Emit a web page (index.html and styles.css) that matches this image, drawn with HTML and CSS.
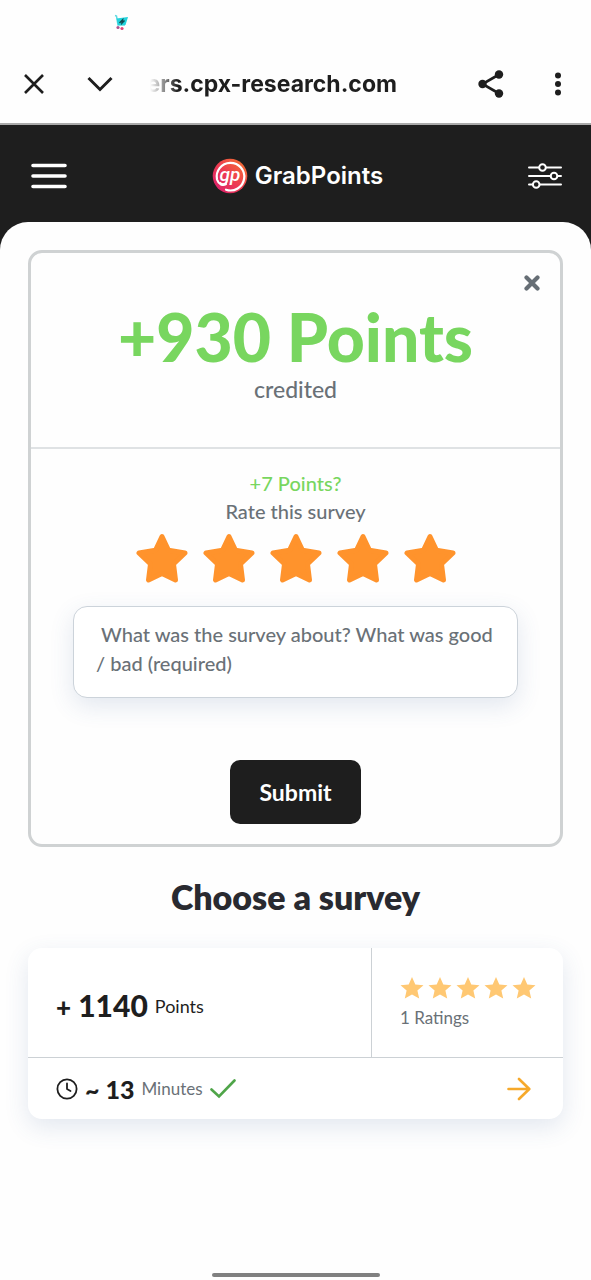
FILE: index.html
```html
<!DOCTYPE html>
<html lang="en">
<head>
<meta charset="utf-8">
<meta name="viewport" content="width=device-width, initial-scale=1">
<title>GrabPoints surveys</title>
<link rel="stylesheet" href="styles.css">
</head>
<body>
<svg class="defs" aria-hidden="true">
  <symbol id="star-round" viewBox="0 0 52 50"><path d="M26 3.500 32.500 17.300 49 20 37.500 31 39.500 47 26 40.500 12.500 47 14.500 31 3 20 19.500 17.300Z" fill="currentColor" stroke="currentColor" stroke-width="5" stroke-linejoin="round"/></symbol>
  <symbol id="star-small" viewBox="0 0 24 24"><path d="M12 1 15.300 8.400 23.500 9.300 17.400 14.600 19.200 22.500 12 18.400 4.800 22.500 6.600 14.600 .5 9.300 8.700 8.400Z" fill="currentColor"/></symbol>
</svg>

<div class="status-bar">
  <svg class="status-cart" viewBox="0 0 15 17" aria-hidden="true">
    <path d="M1 1.500 2.500 2 4 11H11" fill="none" stroke="#5fd9e0" stroke-width="1.500"/>
    <path d="M2.500 4.500 14 3 11.500 11H4Z" fill="#22d3dc"/>
    <path d="M5.500 9 8.500 6 8 9 10.500 6.500" fill="none" stroke="#124b52" stroke-width="1.500"/>
    <circle cx="4" cy="13.500" r="1.600" fill="#b0528f"/><circle cx="8" cy="14.500" r="1.600" fill="#e0457a"/>
  </svg>
</div>

<div class="browser-bar">
  <button class="icon-button" aria-label="Close tab"><svg width="20" height="20" viewBox="0 0 20 20"><path d="M1 1 19 19M19 1 1 19" class="line"/></svg></button>
  <button class="icon-button collapse" aria-label="Collapse"><svg width="26" height="16" viewBox="0 0 26 16"><path d="M1.500 2 13 13.500 24.500 2" class="line thick"/></svg></button>
  <div class="address"><span>ers.cpx-research.com</span></div>
  <button class="icon-button share" aria-label="Share"><svg width="26" height="28" viewBox="0 0 26 28"><path d="M21 4.500 4.500 14 21 23.500" class="line"/><g fill="#1e1e1e"><circle cx="21" cy="4.500" r="4.200"/><circle cx="4.500" cy="14" r="4.200"/><circle cx="21" cy="23.500" r="4.200"/></g></svg></button>
  <button class="icon-button" aria-label="More options"><svg width="8" height="24" viewBox="0 0 8 24" fill="#1e1e1e"><circle cx="4" cy="3.500" r="3"/><circle cx="4" cy="12" r="3"/><circle cx="4" cy="20.500" r="3"/></svg></button>
</div>

<header class="site-header">
  <button class="icon-button" aria-label="Menu"><svg width="36" height="26" viewBox="0 0 36 26"><path d="M2 2.500H34M2 13H34M2 23.500H34" fill="none" stroke="#fff" stroke-width="3.600" stroke-linecap="round"/></svg></button>
  <a class="logo" href="#">
    <svg width="36" height="36" viewBox="0 0 36 36" aria-hidden="true">
      <defs><linearGradient id="logo-fill" x1="0" y1="1" x2="1" y2="0"><stop offset="0" stop-color="#d81b72"/><stop offset=".5" stop-color="#ee3d50"/><stop offset="1" stop-color="#f47a2c"/></linearGradient></defs>
      <circle cx="18" cy="18" r="17.300" fill="url(#logo-fill)"/>
      <path d="M14 26C11 28 6.500 26.500 5 21.500A13.800 13.800 0 1 1 14 31.700" fill="none" stroke="#fff" stroke-width="2.200" stroke-linecap="round"/>
      <text x="18" y="23" class="logo-mark">gp</text>
    </svg>
    <span>GrabPoints</span>
  </a>
  <button class="icon-button" aria-label="Filters"><svg width="34" height="26" viewBox="0 0 34 26"><g fill="none" stroke="#fff" stroke-width="2" stroke-linecap="round"><path d="M1 4.500H11M18 4.500H33M1 13H22.500M30 13H33M1 21.500H4.500M12 21.500H33"/><circle cx="14.500" cy="4.500" r="3.300"/><circle cx="26" cy="13" r="3.300"/><circle cx="8.200" cy="21.500" r="3.300"/></g></svg></button>
</header>

<div class="backdrop">
<main class="panel">
  <section class="reward">
    <div class="reward-summary">
      <button class="icon-button dismiss" aria-label="Dismiss"><svg width="16" height="16" viewBox="0 0 16 16"><path d="M2.500 2.500 13.500 13.500M13.500 2.500 2.500 13.500" fill="none" stroke="#666e75" stroke-width="4.200" stroke-linecap="round"/></svg></button>
      <p class="reward-points">+930 Points</p>
      <p class="reward-note">credited</p>
    </div>
    <form class="rating-form">
      <p class="bonus">+7 Points?</p>
      <fieldset class="rating">
        <legend>Rate this survey</legend>
        <div class="rating-stars">
          <label><input type="radio" name="rating" value="1" aria-label="1 star"><svg><use href="#star-round"/></svg></label>
          <label><input type="radio" name="rating" value="2" aria-label="2 stars"><svg><use href="#star-round"/></svg></label>
          <label><input type="radio" name="rating" value="3" aria-label="3 stars"><svg><use href="#star-round"/></svg></label>
          <label><input type="radio" name="rating" value="4" aria-label="4 stars"><svg><use href="#star-round"/></svg></label>
          <label><input type="radio" name="rating" value="5" aria-label="5 stars" checked><svg><use href="#star-round"/></svg></label>
        </div>
      </fieldset>
      <textarea class="comment" rows="2" aria-label="Survey comment" placeholder=" What was the survey about? What was good / bad (required)"></textarea>
      <button class="submit" type="button">Submit</button>
    </form>
  </section>

  <h1 class="title">Choose a survey</h1>

  <article class="survey">
    <div class="survey-top">
      <p class="survey-points"><strong><span class="plus">+</span> 1140</strong> <span>Points</span></p>
      <div class="survey-rating">
        <div class="small-stars" role="img" aria-label="5 out of 5">
          <svg><use href="#star-small"/></svg><svg><use href="#star-small"/></svg><svg><use href="#star-small"/></svg><svg><use href="#star-small"/></svg><svg><use href="#star-small"/></svg>
        </div>
        <p>1 Ratings</p>
      </div>
    </div>
    <div class="survey-bottom">
      <svg width="22" height="22" viewBox="0 0 22 22" aria-hidden="true"><g fill="none" stroke="#1e1e1e" stroke-width="1.800" stroke-linecap="round" stroke-linejoin="round"><circle cx="11" cy="11" r="9.600"/><path d="M11 5.500V11L14.500 13"/></g></svg>
      <strong>~ 13</strong>
      <span class="unit">Minutes</span>
      <svg width="26" height="20" viewBox="0 0 26 20" aria-hidden="true"><path d="M1.500 10.500 9 17.500 24.500 1.500" fill="none" stroke="#4fa549" stroke-width="2.600" stroke-linecap="round"/></svg>
      <a class="open" href="#" aria-label="Open survey"><svg width="24" height="24" viewBox="0 0 24 24"><path d="M1.500 12H22M12 2 22.300 12 12 22" fill="none" stroke="#f6a92b" stroke-width="2.600" stroke-linecap="round" stroke-linejoin="round"/></svg></a>
    </div>
  </article>
</main>
</div>
<div class="home-indicator"></div>
</body>
</html>
```
FILE: styles.css
```css
* { box-sizing: border-box; }

body {
  display: flex;
  flex-direction: column;
  min-height: 100vh;
  margin: 0;
  background: #fefefe;
  color: #1e1e1e;
  font-family: Lato, "Open Sans", sans-serif;
}

p, h1 { margin: 0; }
svg { display: block; flex: none; }
.defs { position: absolute; width: 0; height: 0; }
.line { fill: none; stroke: #1e1e1e; stroke-width: 2.6; }
.thick { stroke-width: 3; }

.icon-button {
  flex: none;
  padding: 0;
  border: 0;
  background: none;
  cursor: pointer;
}

.status-bar { height: 44px; padding: 14px 114px; }
.status-cart { width: 15px; height: 17px; }

.browser-bar {
  display: flex;
  align-items: center;
  height: 81px;
  padding: 0 29px 0 24px;
  border-bottom: 2px solid #aaa;
}
.collapse { margin-left: 43px; }
.share { margin-right: 50px; }
.address {
  display: flex;
  justify-content: flex-end;
  width: 247px;
  margin: 0 auto 0 37px;
  overflow: hidden;
  font: 700 23px/32px Inter, sans-serif;
  white-space: nowrap;
  mask-image: linear-gradient(to right, transparent, #000 28px);
}

.site-header {
  display: flex;
  align-items: center;
  justify-content: space-between;
  height: 97px;
  padding: 4px 29px 0 31px;
  background: #1e1e1e;
}
.logo {
  display: flex;
  align-items: center;
  gap: 7px;
  color: #fff;
  font: 600 24px/36px Inter, sans-serif;
  text-decoration: none;
}
.logo-mark {
  fill: #fff;
  font: italic 500 19px Roboto, sans-serif;
  text-anchor: middle;
}

.backdrop { background: linear-gradient(#1e1e1e 40px, transparent 40px); }
.panel {
  padding: 28px 28px 0;
  border-radius: 28px 28px 0 0;
  background: #fefefe;
}

.reward {
  border: 3px solid #cfd2d3;
  border-radius: 14px;
  text-align: center;
}
.reward-summary {
  position: relative;
  padding: 46px 20px 43px;
  border-bottom: 2px solid #dfe2e4;
}
.dismiss { position: absolute; top: 22px; right: 20px; }
.reward-points {
  color: #78d65f;
  font-size: 66px;
  font-weight: 900;
  line-height: 76px;
}
.reward-note { color: #6a7177; font-size: 23px; font-weight: 500; line-height: 29px; }

.rating-form {
  display: flex;
  flex-direction: column;
  align-items: center;
  padding: 20px 42px 20px;
  color: #6a7177;
  font-size: 20px;
  font-weight: 500;
  line-height: 28px;
}
.bonus { color: #78d65f; }
.rating { min-width: 0; margin: 0; padding: 0; border: 0; }
.rating legend { margin: 0 auto; padding: 0; }
.rating-stars { display: flex; gap: 15px; padding-top: 8px; }
.rating-stars label { position: relative; }
.rating-stars svg { width: 52px; height: 50px; color: #ff932c; }
.rating-stars input { position: absolute; inset: 0; margin: 0; opacity: 0; }

.comment {
  width: 100%;
  height: 92px;
  margin: 23px 0 62px;
  padding: 13px 22px;
  border: 1px solid #ccd3da;
  border-radius: 14px;
  background: #fff;
  box-shadow: 0 8px 24px #3c5a9624;
  font: 500 20px/29px Lato, sans-serif;
  overflow: hidden;
  resize: none;
}
.comment::placeholder { color: #6a7177; opacity: 1; }
.submit {
  padding: 18px 29px;
  border: 0;
  border-radius: 10px;
  background: #1e1e1e;
  color: #fff;
  font: 700 23px/28px Lato, sans-serif;
}

.title {
  padding: 29px 0 30px;
  color: #292a30;
  font-size: 34px;
  font-weight: 800;
  line-height: 42px;
  text-align: center;
}

.survey {
  border-radius: 14px;
  background: #fff;
  box-shadow: 0 8px 24px #3c5a9624;
}
.survey-top { display: flex; border-bottom: 1px solid #ccd1d5; }
.survey-points {
  display: flex;
  flex: 1;
  align-items: center;
  gap: 7px;
  padding: 6px 28px 0;
  font-size: 18px;
  line-height: 40px;
}
.survey-points strong { font-size: 30px; font-weight: 900; }
.survey-points .plus { font-size: 26px; }
.survey-rating {
  padding: 28px 27px 26px 28px;
  border-left: 1px solid #ccd1d5;
  color: #6a7177;
  font-size: 17px;
  line-height: 26px;
}
.small-stars { display: flex; gap: 4px; padding-bottom: 5px; }
.small-stars svg { width: 24px; height: 24px; color: #ffc873; }

.survey-bottom {
  display: flex;
  align-items: center;
  gap: 7px;
  height: 61px;
  padding: 0 32px 0 28px;
}
.survey-bottom strong { font-size: 25px; font-weight: 900; line-height: 32px; }
.unit { color: #6a7177; font-size: 17px; }
.open { margin-left: auto; }

.home-indicator {
  width: 168px;
  height: 4px;
  margin: auto auto 3px;
  border-radius: 2px;
  background: #808080;
}
```
